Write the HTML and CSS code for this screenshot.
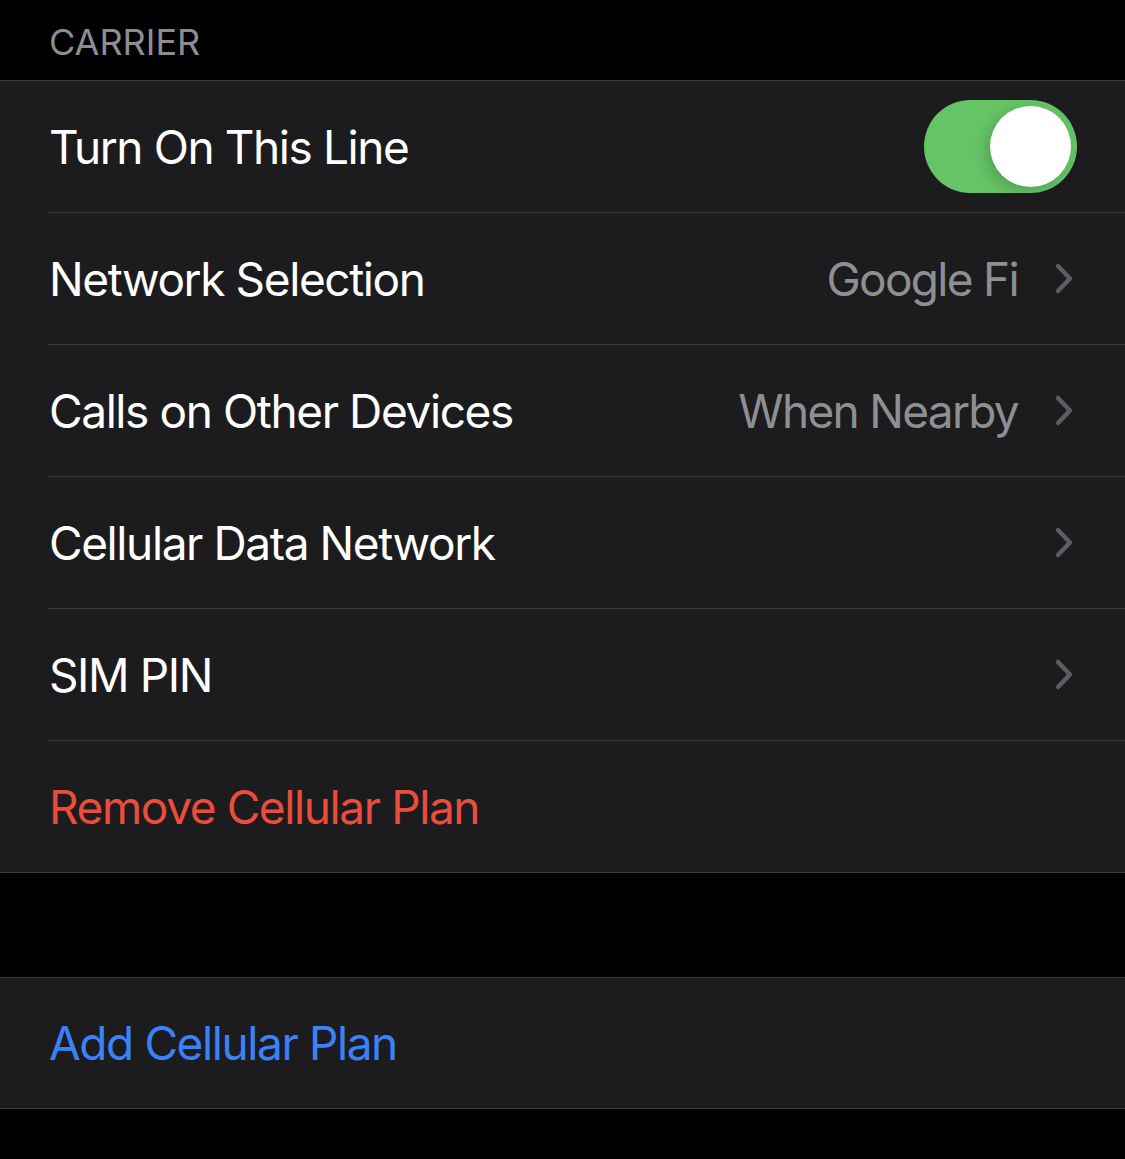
FILE: index.html
```html
<!DOCTYPE html>
<html lang="en">
<head>
  <meta charset="UTF-8">
  <title>Cellular Plan</title>
  <meta name="viewport" content="width=device-width, initial-scale=1">
  <link rel="stylesheet" href="styles.css">
</head>
<body>
  <div class="section-header">CARRIER</div>

  <div class="group">
    <div class="cell">
      <div class="cell-body">
        <span class="label">Turn On This Line</span>
        <span class="switch on"><span class="knob"></span></span>
      </div>
    </div>
    <div class="cell">
      <div class="cell-body">
        <span class="label">Network Selection</span>
        <span class="value">Google Fi</span>
        <svg class="chevron" width="20" height="33" viewBox="0 0 20 33"><path d="M4 4 L16 16.5 L4 29" fill="none" stroke="#5c5c61" stroke-width="4.5" stroke-linecap="round" stroke-linejoin="round"/></svg>
      </div>
    </div>
    <div class="cell">
      <div class="cell-body">
        <span class="label">Calls on Other Devices</span>
        <span class="value">When Nearby</span>
        <svg class="chevron" width="20" height="33" viewBox="0 0 20 33"><path d="M4 4 L16 16.5 L4 29" fill="none" stroke="#5c5c61" stroke-width="4.5" stroke-linecap="round" stroke-linejoin="round"/></svg>
      </div>
    </div>
    <div class="cell">
      <div class="cell-body">
        <span class="label">Cellular Data Network</span>
        <svg class="chevron" width="20" height="33" viewBox="0 0 20 33"><path d="M4 4 L16 16.5 L4 29" fill="none" stroke="#5c5c61" stroke-width="4.5" stroke-linecap="round" stroke-linejoin="round"/></svg>
      </div>
    </div>
    <div class="cell">
      <div class="cell-body">
        <span class="label">SIM PIN</span>
        <svg class="chevron" width="20" height="33" viewBox="0 0 20 33"><path d="M4 4 L16 16.5 L4 29" fill="none" stroke="#5c5c61" stroke-width="4.5" stroke-linecap="round" stroke-linejoin="round"/></svg>
      </div>
    </div>
    <div class="cell last">
      <div class="cell-body">
        <span class="label destructive">Remove Cellular Plan</span>
      </div>
    </div>
  </div>

  <div class="spacer"></div>

  <div class="group">
    <div class="cell last short">
      <div class="cell-body">
        <span class="label action">Add Cellular Plan</span>
      </div>
    </div>
  </div>
</body>
</html>
```

FILE: styles.css
```css
body {
  margin: 0;
  background: #000;
  font-family: Inter, "Noto Sans", sans-serif;
  color: #fff;
}
.section-header {
  height: 80px;
  box-sizing: border-box;
  padding: 22px 0 0 49px;
  font-size: 36px;
  color: #8d8d93;
  line-height: 40px;
}
.group {
  background: #1c1c1e;
  border-top: 1px solid #3a3a3d;
  border-bottom: 1px solid #3a3a3d;
}
.cell {
  height: 132px;
  padding-left: 48px;
}
.cell.last {
  height: 131px;
}
.cell.short {
  height: 130px;
}
.cell-body {
  height: 100%;
  box-sizing: border-box;
  display: flex;
  align-items: center;
  padding-right: 51px;
  border-bottom: 1px solid #3a3a3d;
}
.cell.last .cell-body {
  border-bottom: none;
}
.label {
  flex: 1;
  font-size: 46px;
  letter-spacing: -1.4px;
  padding-left: 1px;
  white-space: nowrap;
}
.value {
  font-size: 46px;
  letter-spacing: -1.7px;
  color: #8e8e93;
  margin-right: 36px;
}
.destructive {
  color: #eb4d3d;
}
.action {
  color: #3a82f7;
}
.switch {
  width: 153px;
  height: 93px;
  border-radius: 47px;
  background: #65c466;
  position: relative;
  margin-right: -3px;
}
.knob {
  position: absolute;
  top: 6px;
  right: 6px;
  width: 81px;
  height: 81px;
  border-radius: 50%;
  background: #fff;
  box-shadow: -4px 4px 14px rgba(0, 0, 0, 0.18);
}
.spacer {
  height: 104px;
}
```
